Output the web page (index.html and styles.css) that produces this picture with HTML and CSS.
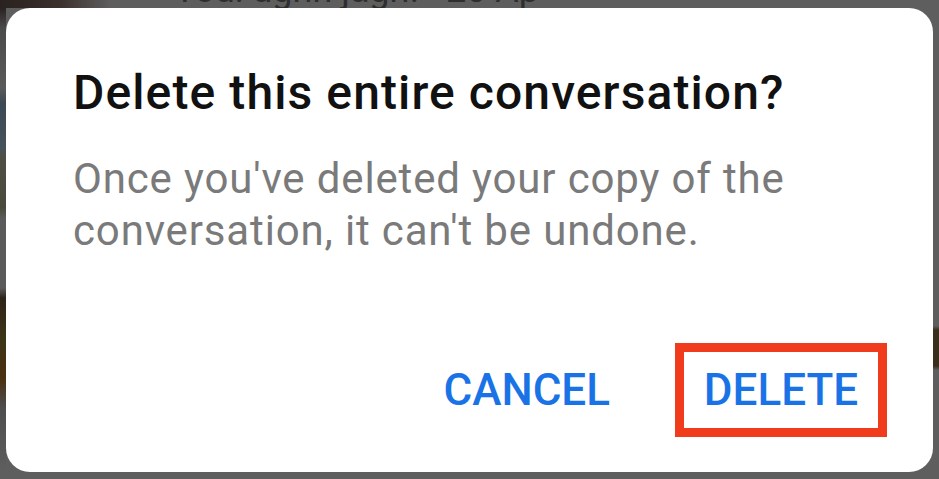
FILE: index.html
```html
<!DOCTYPE html>
<html>
<head>
<meta charset="utf-8">
<link rel="stylesheet" href="styles.css">
</head>
<body>
<div class="screen">
  <div class="topbar"><span class="peek">You: ughh jagh! · 20 Ap</span></div>
  <div class="middle">
    <div class="strip strip-left"></div>
    <div class="dialog">
      <h1 class="title">Delete this entire conversation?</h1>
      <p class="message">Once you've deleted your copy of the conversation, it can't be undone.</p>
      <div class="actions">
        <button class="btn btn-cancel">CANCEL</button>
        <button class="btn btn-delete">DELETE</button>
      </div>
    </div>
    <div class="strip strip-right"></div>
  </div>
  <div class="bottombar"></div>
</div>
</body>
</html>
```

FILE: styles.css
```css
html, body {
  margin: 0;
  padding: 0;
}
body {
  width: 939px;
  height: 479px;
  overflow: hidden;
  background: #5e5e5e;
  font-family: Roboto, "Noto Sans", sans-serif;
}
.screen {
  display: flex;
  flex-direction: column;
  height: 479px;
}
.topbar {
  height: 8px;
  flex: none;
  display: flex;
  align-items: flex-end;
  overflow: hidden;
  padding-left: 174px;
  background: linear-gradient(90deg, #2a2220 0, #3a302c 60px, #5e5e5e 110px);
}
.peek {
  font-size: 36px;
  line-height: 36px;
  color: #2e2e2e;
  white-space: nowrap;
}
.middle {
  flex: 1;
  display: flex;
}
.strip {
  width: 6px;
  flex: none;
}
.strip-left {
  background: linear-gradient(180deg,
    #2a2220 0, #4a4a4a 20px, #5a5a5a 80px, #3c4a55 95px, #46525c 140px,
    #4e4e44 150px, #4a4a3c 200px, #5a5a5a 210px, #5a5a5a 280px,
    #2e2418 290px, #3c3418 330px, #4a3010 370px, #4e4e4e 400px, #5e5e5e 464px);
}
.strip-right {
  background: linear-gradient(180deg,
    #5e5e5e 0, #5e5e5e 318px, #3a2e1c 322px, #3a2e1c 358px, #5e5e5e 362px, #5e5e5e 464px);
}
.dialog {
  width: 927px;
  height: 464px;
  box-sizing: border-box;
  background: #ffffff;
  border-radius: 24px;
  padding: 57px 46px 35px 67px;
  display: flex;
  flex-direction: column;
}
.title {
  margin: 0;
  font-size: 48px;
  line-height: 56px;
  letter-spacing: 1.1px;
  font-weight: 500;
  color: #111111;
  white-space: nowrap;
}
.message {
  margin: 32px 0 0 0;
  font-size: 42px;
  line-height: 52px;
  letter-spacing: 0.85px;
  font-weight: 400;
  color: #7a7a7a;
  width: 760px;
}
.actions {
  margin-top: auto;
  display: flex;
  justify-content: flex-end;
  align-items: center;
}
.btn {
  font-family: Roboto, "Noto Sans", sans-serif;
  font-size: 44px;
  font-weight: 500;
  color: #1a73e6;
  background: none;
  border: none;
  padding: 0;
  line-height: 50px;
}
.btn-cancel {
  margin-right: 65px;
}
.btn-delete {
  height: 94px;
  width: 212px;
  border: 9px solid #f03b1c;
  box-sizing: border-box;
}
```
